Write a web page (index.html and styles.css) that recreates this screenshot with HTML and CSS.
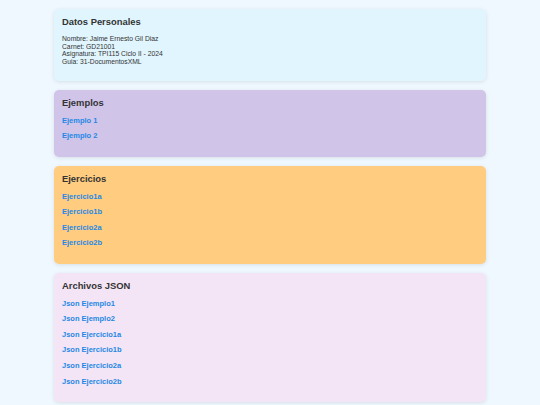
FILE: index.html
```html
<!DOCTYPE html>
<html lang="es">
<head>
<meta charset="utf-8">
<title>Documentos XML</title>
<link rel="stylesheet" href="styles.css">
</head>
<body>
<main class="container">
  <section class="card card-datos">
    <h2 class="card-title">Datos Personales</h2>
    <p class="info">Nombre: Jaime Ernesto Gil Diaz<br>Carnet: GD21001<br>Asignatura: TPI115 Ciclo II - 2024<br>Guia: 31-DocumentosXML</p>
  </section>
  <section class="card card-ejemplos">
    <h2 class="card-title">Ejemplos</h2>
    <ul class="links">
      <li><a href="#">Ejemplo 1</a></li>
      <li><a href="#">Ejemplo 2</a></li>
    </ul>
  </section>
  <section class="card card-ejercicios">
    <h2 class="card-title">Ejercicios</h2>
    <ul class="links">
      <li><a href="#">Ejercicio1a</a></li>
      <li><a href="#">Ejercicio1b</a></li>
      <li><a href="#">Ejercicio2a</a></li>
      <li><a href="#">Ejercicio2b</a></li>
    </ul>
  </section>
  <section class="card card-json">
    <h2 class="card-title">Archivos JSON</h2>
    <ul class="links">
      <li><a href="#">Json Ejemplo1</a></li>
      <li><a href="#">Json Ejemplo2</a></li>
      <li><a href="#">Json Ejercicio1a</a></li>
      <li><a href="#">Json Ejercicio1b</a></li>
      <li><a href="#">Json Ejercicio2a</a></li>
      <li><a href="#">Json Ejercicio2b</a></li>
    </ul>
  </section>
</main>
</body>
</html>
```

FILE: styles.css
```css
html, body {
  margin: 0;
  padding: 0;
}

body {
  background: #f0f8ff;
  font-family: "Liberation Sans", Arial, sans-serif;
  color: #333;
}

.container {
  width: 432px;
  margin: 0 auto;
  padding: 9px 0;
  display: flex;
  flex-direction: column;
  gap: 9px;
}

.card {
  padding: 8px 8px 12.6px;
  border-radius: 5px;
  box-shadow: 0 1px 4px rgba(0, 0, 0, 0.1);
}

.card-datos { background: #e1f5fe; }
.card-ejemplos { background: #d1c4e9; }
.card-ejercicios { background: #ffcc80; }
.card-json { background: #f3e5f5; }

.card-title {
  margin: 0;
  font-size: 9.4px;
  line-height: 10px;
  font-weight: bold;
  color: #333;
}

.info {
  margin: 8px 0 2.4px;
  font-size: 6.75px;
  line-height: 7.7px;
  color: #333;
}

.links {
  list-style: none;
  margin: 5px 0 0;
  padding: 0;
}

.links li {
  line-height: 15.6px;
  font-size: 7.5px;
}

.links a {
  color: #1e88e5;
  font-weight: bold;
  text-decoration: none;
}
```
